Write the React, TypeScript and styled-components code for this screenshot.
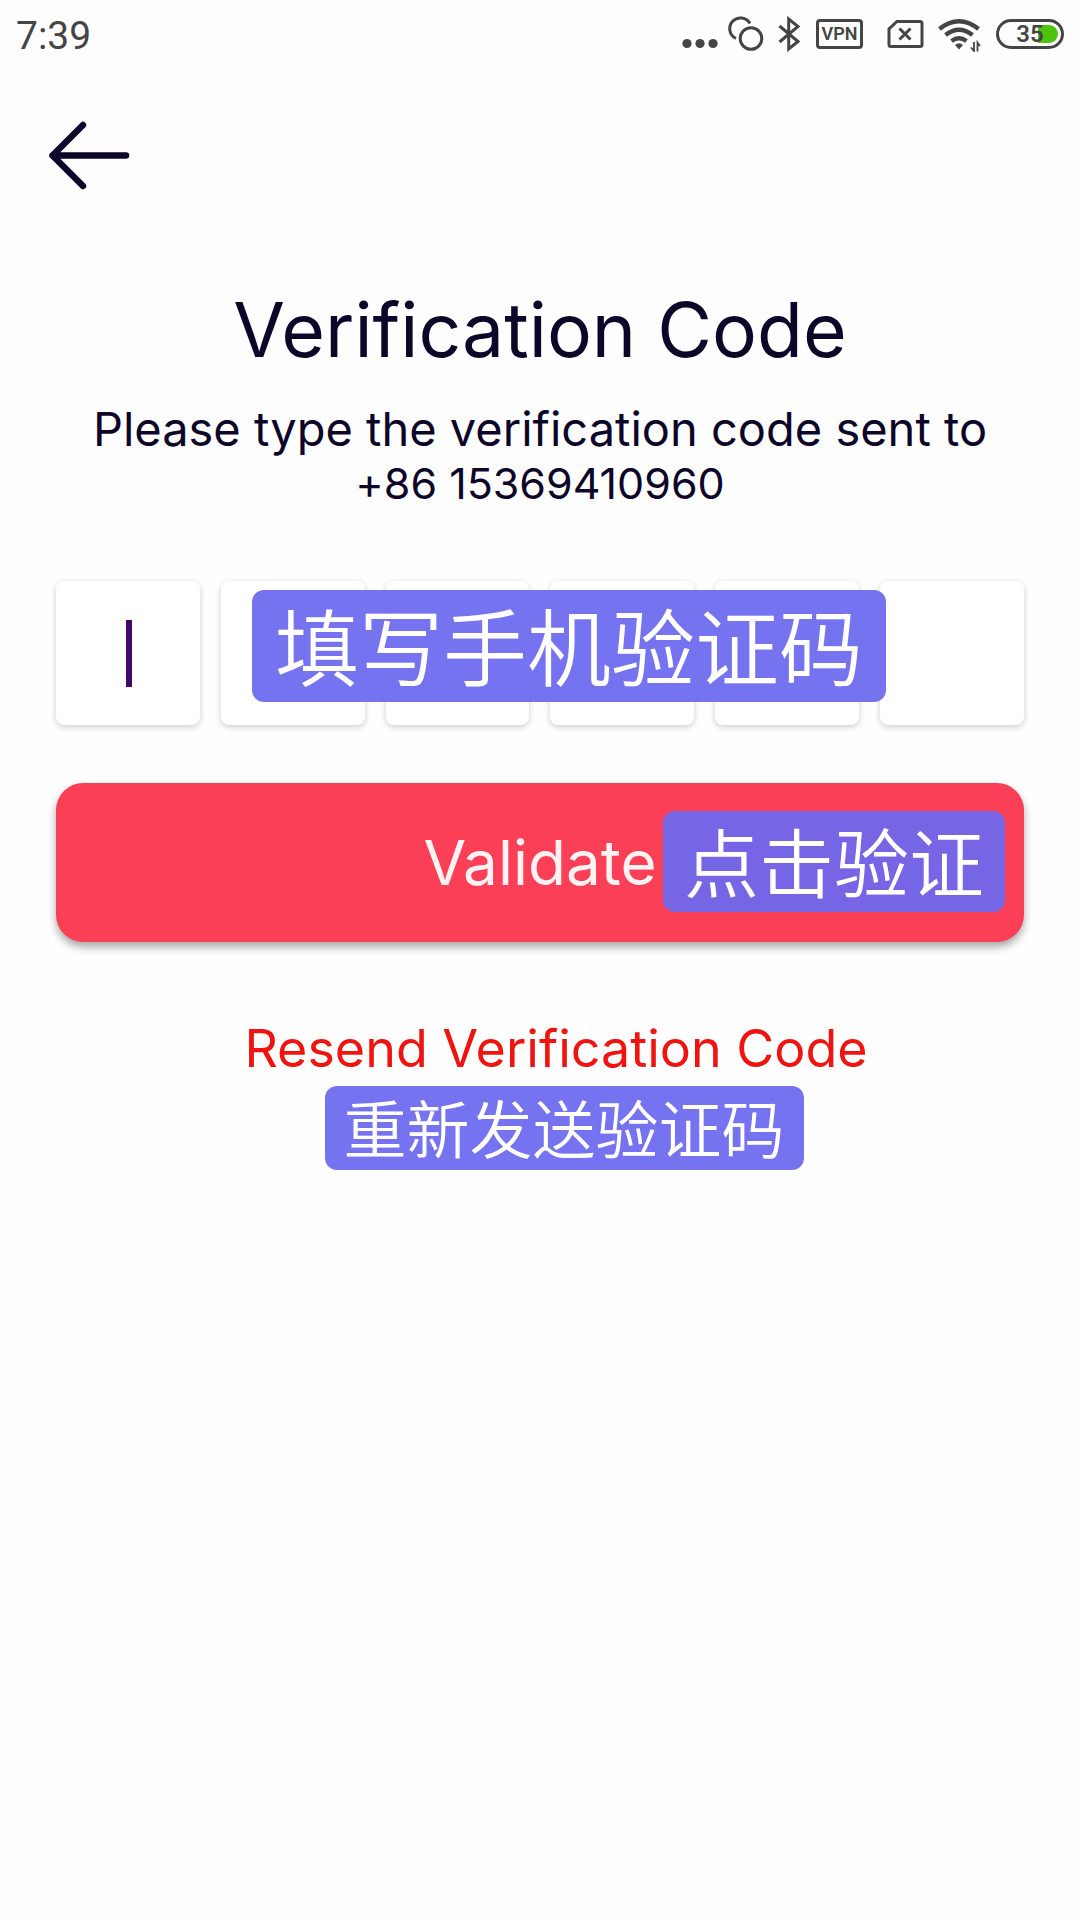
import React, { useState } from 'react';
import styled, { createGlobalStyle } from 'styled-components';

const ink = '#0d0628';
const statusInk = '#454545';

const GlobalStyle = createGlobalStyle`
  *, *::before, *::after { box-sizing: border-box; }
  body {
    margin: 0;
    background: #fefefe;
    color: ${ink};
    font-family: Inter, "Liberation Sans", "Noto Sans CJK SC", sans-serif;
    font-weight: 400;
    font-variant-ligatures: none;
  }
`;

const Screen = styled.div`
  display: flex;
  flex-direction: column;
  min-height: 100vh;
`;

const StatusBar = styled.header`
  display: flex;
  align-items: center;
  justify-content: space-between;
  height: 68px;
  padding: 0 16px;
  color: ${statusInk};
`;

const Clock = styled.time`
  padding-top: 4px;
  font: 400 39px/44px Roboto, sans-serif;
`;

const StatusIcons = styled.div`
  display: flex;
  align-items: center;
  gap: 8px;
`;

const StatusGroup = styled.div`
  display: flex;
  align-items: center;
  gap: 13px;
  margin-left: 16px;
`;

const Glyph = styled.svg`
  display: block;
  height: 36px;
  fill: none;
  stroke: ${statusInk};
  stroke-width: 3;
`;

const VpnBadge = styled.span`
  display: flex;
  align-items: center;
  justify-content: center;
  width: 47px;
  height: 30px;
  margin-left: 7px;
  border: 3px solid ${statusInk};
  border-radius: 4px;
  font: 600 18px/20px Roboto, sans-serif;
`;

const Battery = styled.span`
  display: flex;
  align-items: center;
  justify-content: center;
  width: 68px;
  height: 30px;
  border: 3px solid ${statusInk};
  border-radius: 15px;
  padding: 3px;
  background: linear-gradient(90deg, transparent 36px, #4dc30b 36px) content-box;
  font: 600 24px/24px Roboto, sans-serif;
`;

const TopBar = styled.nav`
  display: flex;
  padding: 48px 44px 0;
`;

const BackButton = styled.button`
  display: flex;
  padding: 0;
  border: 0;
  background: none;
  cursor: pointer;
`;

const Content = styled.main`
  display: flex;
  flex-direction: column;
  padding: 0 56px;
`;

const Title = styled.h1`
  margin: 92px 0 0;
  font-size: 75px;
  font-weight: inherit;
  line-height: 88px;
  text-align: center;
`;

const Subtitle = styled.p`
  margin: 28px 0 0;
  font-size: 47px;
  line-height: 54px;
  text-align: center;
`;

const Phone = styled.span`
  display: block;
  font-size: 43px;
`;

const CodeRow = styled.div`
  position: relative;
  display: grid;
  grid-template-columns: repeat(6, 1fr);
  gap: 21px;
  margin-top: 71px;
`;

const CodeCell = styled.label`
  position: relative;
  display: flex;
`;

const CodeInput = styled.input`
  width: 100%;
  height: 144px;
  padding: 0;
  border: 0;
  border-radius: 8px;
  outline: 0;
  background: #fff;
  box-shadow: 0 2px 6px rgba(0, 0, 0, 0.2);
  color: ${ink};
  caret-color: transparent;
  font: inherit;
  font-size: 62px;
  text-align: center;
`;

const Caret = styled.span`
  position: absolute;
  top: 39px;
  left: 70px;
  width: 6px;
  height: 67px;
  background: #430967;
`;

const Note = styled.span<{ $size: number; $line: number; $pad: number }>`
  padding: 0 ${(p) => p.$pad}px 4px;
  border-radius: 12px;
  background: rgba(108, 104, 239, 0.93);
  color: #fff;
  font-family: "Noto Sans CJK SC", sans-serif;
  font-size: ${(p) => p.$size}px;
  font-weight: 350;
  line-height: ${(p) => p.$line}px;
  white-space: nowrap;
`;

const CodeNote = styled(Note)`
  position: absolute;
  top: 9px;
  left: 196px;
  pointer-events: none;
`;

const ValidateNote = styled(Note)`
  position: absolute;
  top: 28px;
  right: 19px;
`;

const ValidateButton = styled.button`
  position: relative;
  height: 159px;
  margin-top: 58px;
  padding: 0;
  border: 0;
  border-radius: 27px;
  background: #fb3f57;
  box-shadow: 0 5px 9px rgba(0, 0, 0, 0.34);
  color: #fff2f2;
  font: inherit;
  font-size: 62px;
  cursor: pointer;
`;

const Resend = styled.div`
  display: flex;
  flex-direction: column;
  align-items: center;
  margin-top: 76px;
  padding-left: 32px;
`;

const ResendLink = styled.a`
  color: #ef1410;
  font-size: 52px;
  line-height: 62px;
  text-decoration: none;
`;

const ResendNote = styled(Note)`
  margin: 6px 0 0 16px;
`;

const cells = [0, 1, 2, 3, 4, 5];

export default function App() {
  const [code, setCode] = useState<string[]>(cells.map(() => ''));

  const update = (index: number, value: string) =>
    setCode((prev) => prev.map((digit, i) => (i === index ? value : digit)));

  return (
    <Screen>
      <GlobalStyle />
      <StatusBar>
        <Clock>7:39</Clock>
        <StatusIcons>
          <Glyph width="37" viewBox="682 15 37 36" aria-hidden="true">
            <g fill={statusInk} stroke="none">
              <circle cx="687" cy="42.5" r="4.6" />
              <circle cx="700" cy="42.5" r="4.6" />
              <circle cx="713" cy="42.5" r="4.6" />
            </g>
          </Glyph>
          <Glyph width="42" viewBox="727 15 42 36" aria-hidden="true">
            <circle cx="751" cy="37.5" r="10.8" />
            <path d="M736 37.5A10.8 10.8 0 1 1 750 22.5" />
          </Glyph>
          <Glyph width="24" viewBox="777 15 24 36" aria-hidden="true">
            <path d="M779.5 25 798 40.5 788.7 48V18L798 25.5 779.5 41" />
          </Glyph>
          <VpnBadge>VPN</VpnBadge>
          <StatusGroup>
            <Glyph width="38" viewBox="887 15 38 36" aria-hidden="true">
              <path d="M897 20.5H920Q922 20.5 922 22.5V43.5Q922 45.5 920 45.5H891Q889 45.5 889 43.5V28Z" />
              <path d="M899.5 27.5 910.5 38.5M910.5 27.5 899.5 38.5" />
            </Glyph>
            <Glyph width="45" viewBox="938 15 45 36" aria-hidden="true">
              <g strokeWidth="4.4">
                <path d="M939.5 28Q959 12.5 978.5 28" />
                <path d="M945.5 34Q959 23.5 972.5 34" />
                <path d="M951.5 40Q959 34.5 966.5 40" />
              </g>
              <path d="M955 44Q959 40.5 963 44L959 48.5Z" fill={statusInk} stroke="none" />
              <path d="M974 41V50L971 46.5M977.5 50.5V41.5L980 45" strokeWidth="1.8" />
            </Glyph>
            <Battery>35</Battery>
          </StatusGroup>
        </StatusIcons>
      </StatusBar>

      <TopBar>
        <BackButton type="button" aria-label="Back">
          <svg width="90" height="78" viewBox="0 0 90 78" fill="none" stroke={ink} strokeWidth="6.5" strokeLinecap="round" strokeLinejoin="round">
            <path d="M39 9 8.5 39.5 39 70M8.5 39.5H82" />
          </svg>
        </BackButton>
      </TopBar>

      <Content>
        <Title>Verification Code</Title>
        <Subtitle>
          Please type the verification code sent to
          <Phone>+86 15369410960</Phone>
        </Subtitle>

        <CodeRow>
          {cells.map((i) => (
            <CodeCell key={i}>
              <CodeInput
                aria-label={`Digit ${i + 1}`}
                inputMode="numeric"
                maxLength={1}
                value={code[i]}
                onChange={(e) => update(i, e.target.value)}
              />
              {i === 0 && code[0] === '' && <Caret />}
            </CodeCell>
          ))}
          <CodeNote $size={84} $line={108} $pad={23}>填写手机验证码</CodeNote>
        </CodeRow>

        <ValidateButton type="button">
          Validate
          <ValidateNote $size={75} $line={97} $pad={21}>点击验证</ValidateNote>
        </ValidateButton>

        <Resend>
          <ResendLink href="#resend">Resend Verification Code</ResendLink>
          <ResendNote $size={63} $line={80} $pad={19}>重新发送验证码</ResendNote>
        </Resend>
      </Content>
    </Screen>
  );
}
